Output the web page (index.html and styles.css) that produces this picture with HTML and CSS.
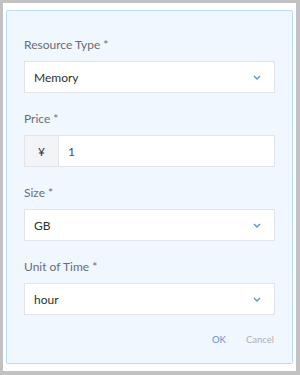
FILE: index.html
```html
<!DOCTYPE html>
<html>
<head>
<meta charset="utf-8">
<link rel="stylesheet" href="styles.css">
</head>
<body>
<div class="frame">
  <div class="panel">
    <div class="item">
      <div class="label">Resource Type *</div>
      <div class="field select"><span>Memory</span><svg class="chev" width="8" height="5" viewBox="0 0 8 5"><path d="M1 1 L4 4 L7 1" fill="none" stroke="#5a8ed8" stroke-width="1.3"/></svg></div>
    </div>
    <div class="item">
      <div class="label">Price *</div>
      <div class="group">
        <div class="prefix">¥</div>
        <div class="field input"><span>1</span></div>
      </div>
    </div>
    <div class="item">
      <div class="label">Size *</div>
      <div class="field select"><span>GB</span><svg class="chev" width="8" height="5" viewBox="0 0 8 5"><path d="M1 1 L4 4 L7 1" fill="none" stroke="#5a8ed8" stroke-width="1.3"/></svg></div>
    </div>
    <div class="item">
      <div class="label">Unit of Time *</div>
      <div class="field select"><span>hour</span><svg class="chev" width="8" height="5" viewBox="0 0 8 5"><path d="M1 1 L4 4 L7 1" fill="none" stroke="#5a8ed8" stroke-width="1.3"/></svg></div>
    </div>
    <div class="actions">
      <span class="ok">OK</span>
      <span class="cancel">Cancel</span>
    </div>
  </div>
</div>
</body>
</html>
```
FILE: styles.css
```css
* { box-sizing: border-box; }
html, body { margin: 0; padding: 0; background: #fff; }
.frame {
  width: 300px;
  height: 375px;
  border-style: solid;
  border-color: #c2c2c2;
  border-width: 3px 4px 4px 3px;
  padding: 7px 3px 7px 3px;
  display: flex;
  font-family: Lato, "Open Sans", sans-serif;
}
.panel {
  flex: 1;
  background: #f0f7ff;
  border: 1px solid #b9dcfc;
  border-radius: 2px;
  padding: 24px 17px 0 17px;
  display: flex;
  flex-direction: column;
}
.item { margin-bottom: 16px; }
.label {
  font-size: 12px;
  line-height: 20px;
  color: #6a6d72;
  margin-bottom: 6px;
}
.field {
  height: 32px;
  background: #fff;
  border: 1px solid #e1e4e9;
  display: flex;
  align-items: center;
  font-size: 12px;
  color: #303133;
}
.select { padding: 0 13px 0 9px; justify-content: space-between; }
.chev { display: block; }
.group { display: flex; }
.prefix {
  width: 34px;
  height: 32px;
  background: #f2f4f7;
  border: 1px solid #e1e4e9;
  border-right: none;
  display: flex;
  align-items: center;
  justify-content: center;
  font-size: 12px;
  color: #303133;
}
.input { flex: 1; padding-left: 9px; color: #4a3f8c; }
.actions {
  margin-top: 2px;
  display: flex;
  justify-content: flex-end;
  gap: 20px;
  font-size: 9.5px;
  line-height: 14px;
  padding-right: 1px;
}
.ok { color: #5b8fd6; }
.cancel { color: #aeb2b8; }
```
